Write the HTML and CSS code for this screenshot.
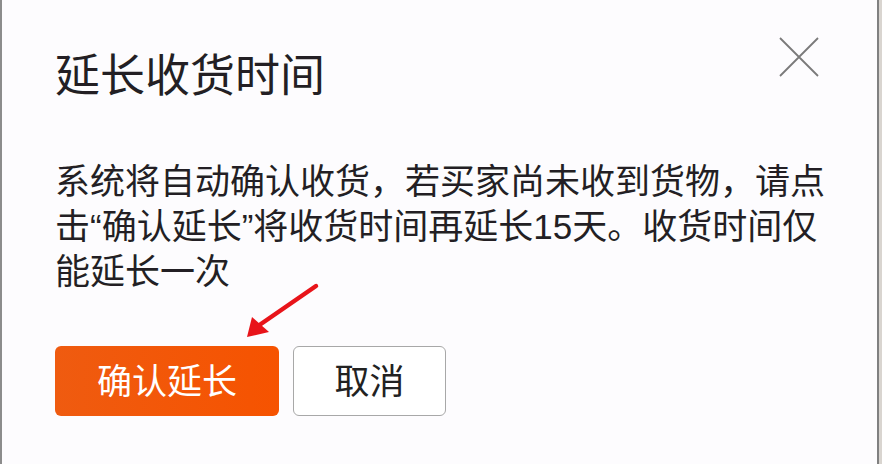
FILE: index.html
```html
<!DOCTYPE html>
<html lang="zh-CN">
<head>
<meta charset="utf-8">
<title>延长收货时间</title>
<link rel="stylesheet" href="styles.css">
</head>
<body>
<div class="page">
  <div class="dialog">
    <button class="close" aria-label="关闭">
      <svg viewBox="0 0 40 40" width="40" height="40"><path d="M1 1 L39 39 M39 1 L1 39" stroke="#7a7a7a" stroke-width="1.8" fill="none"/></svg>
    </button>
    <h1 class="title">延长收货时间</h1>
    <p class="msg">系统将自动确认收货，若买家尚未收到货物，请点击“确认延长”将收货时间再延长15天。收货时间仅能延长一次</p>
    <div class="actions">
      <button class="btn primary">确认延长</button>
      <button class="btn secondary">取消</button>
    </div>
    <svg class="arrow" viewBox="0 0 80 62" width="80" height="62">
      <line x1="74" y1="6" x2="16" y2="46" stroke="#e8141a" stroke-width="4.5" stroke-linecap="round"/>
      <polygon points="5,57 10,37 27,52" fill="#e8141a"/>
    </svg>
  </div>
  <div class="edge"></div>
</div>
</body>
</html>
```

FILE: styles.css
```css
html, body {
  margin: 0;
  padding: 0;
  background: #fdfcfe;
}
.page {
  display: flex;
  width: 882px;
  height: 464px;
  overflow: hidden;
}
.dialog {
  position: relative;
  flex: 0 0 879px;
  box-sizing: border-box;
  border-left: 2px solid #8c8c8c;
  border-right: 2px solid #808080;
  padding: 54px 0 0 53px;
  background: #fdfcfe;
  font-family: "Liberation Sans", "Noto Sans CJK SC", sans-serif;
  color: #222;
}
.edge {
  flex: 1;
  background: #d9d5d0;
}
.close {
  position: absolute;
  top: 37px;
  right: 58px;
  width: 40px;
  height: 40px;
  padding: 0;
  border: 0;
  background: transparent;
}
.close svg {
  display: block;
}
.title {
  margin: 0;
  font-size: 45px;
  line-height: 45px;
  font-weight: 400;
  color: #231f24;
}
.msg {
  margin: 60px 0 0;
  width: 785px;
  font-size: 35px;
  line-height: 45px;
  color: #231f24;
}
.actions {
  display: flex;
  gap: 14px;
  margin-top: 52px;
}
.btn {
  height: 70px;
  border-radius: 6px;
  font-family: "Liberation Sans", "Noto Sans CJK SC", sans-serif;
  font-size: 35px;
  line-height: 1;
  padding: 0;
}
.primary {
  width: 224px;
  border: 0;
  background: linear-gradient(90deg, #ef5b10, #f65300);
  color: #fff;
}
.secondary {
  width: 153px;
  border: 1px solid #a8a8a8;
  background: #fff;
  color: #222;
}
.arrow {
  position: absolute;
  left: 240px;
  top: 280px;
}
```
